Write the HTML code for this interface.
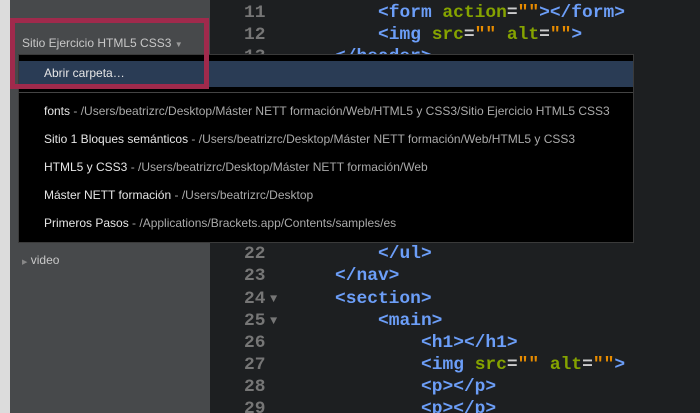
<!DOCTYPE html>
<html><head><meta charset="utf-8"><style>
*{margin:0;padding:0;box-sizing:border-box}
html,body{width:700px;height:413px;overflow:hidden}
body{position:relative;background:#1d1f21;font-family:"Liberation Sans",sans-serif}
.strip{position:absolute;left:0;top:0;width:10px;height:413px;background:#dcdcdc}
.side{position:absolute;left:10px;top:0;width:200px;height:413px;background:#47494b}
.ed{position:absolute;left:210px;top:0;width:490px;height:413px;background:#1d1f21}
.ln{position:absolute;left:244px;font:bold 17.9px/22px "Liberation Mono",monospace;color:#767676;white-space:pre}
.cd{position:absolute;font:bold 17.9px/22px "Liberation Mono",monospace;color:#6c9ef8;white-space:pre}
.a{color:#85a300}.s{color:#e88c00}.e{color:#ccc}
.tri{position:absolute;left:26px;color:#767676;font-size:12px}
.title{position:absolute;left:22px;top:36px;font-size:12px;color:#c8c8c8}
.red{position:absolute;left:10px;top:18px;width:199px;height:71px;border:5px solid #a02a4c;z-index:3}
.dd{position:absolute;left:18px;top:54px;width:616px;height:189px;background:#000;border:1px solid #3a3a3a;z-index:2;font-size:12px;color:#e6e6e6}
.hl{position:absolute;left:0;top:6px;width:614px;height:26px;background:#2a3c55}
.it{position:absolute;left:25px;white-space:nowrap}
.it span{color:#aaa}
.sep{position:absolute;left:0;top:37px;width:614px;height:1px;background:#444}
</style></head><body>
<div class="strip"></div>
<div class="side"></div>
<div class="ed"></div>
<div class="ln" style="top:2px">11</div>
<div class="ln" style="top:24px">12</div>
<div class="ln" style="top:46px">13</div>
<div class="cd" style="left:378px;top:2px">&lt;form <span class="a">action</span><span class="e">=</span><span class="s">""</span>&gt;&lt;/form&gt;</div>
<div class="cd" style="left:378px;top:24px">&lt;img <span class="a">src</span><span class="e">=</span><span class="s">""</span> <span class="a">alt</span><span class="e">=</span><span class="s">""</span>&gt;</div>
<div class="cd" style="left:335px;top:46px">&lt;/header&gt;</div>
<div class="ln" style="top:243px">22</div>
<div class="ln" style="top:265px">23</div>
<div class="ln" style="top:288px">24<span class="tri">▼</span></div>
<div class="ln" style="top:310px">25<span class="tri">▼</span></div>
<div class="ln" style="top:332px">26</div>
<div class="ln" style="top:354px">27</div>
<div class="ln" style="top:376px">28</div>
<div class="ln" style="top:398px">29</div>
<div class="cd" style="left:378px;top:243px">&lt;/ul&gt;</div>
<div class="cd" style="left:335px;top:265px">&lt;/nav&gt;</div>
<div class="cd" style="left:335px;top:288px">&lt;section&gt;</div>
<div class="cd" style="left:378px;top:310px">&lt;main&gt;</div>
<div class="cd" style="left:421px;top:332px">&lt;h1&gt;&lt;/h1&gt;</div>
<div class="cd" style="left:421px;top:354px">&lt;img <span class="a">src</span><span class="e">=</span><span class="s">""</span> <span class="a">alt</span><span class="e">=</span><span class="s">""</span>&gt;</div>
<div class="cd" style="left:421px;top:376px">&lt;p&gt;&lt;/p&gt;</div>
<div class="cd" style="left:421px;top:398px">&lt;p&gt;&lt;/p&gt;</div>
<div class="title">Sitio Ejercicio HTML5 CSS3 <span style="font-size:8px;color:#999">▼</span></div>
<div style="position:absolute;left:22px;top:253px;font-size:12px;color:#c8c8c8"><span style="font-size:7px;color:#888">▶</span>&nbsp;video</div>
<div class="red"></div>
<div class="dd">
<div class="hl"></div>
<div class="it" style="top:11px">Abrir carpeta…</div>
<div class="sep"></div>
<div class="it" style="top:49px">fonts <span>- /Users/beatrizrc/Desktop/Máster NETT formación/Web/HTML5 y CSS3/Sitio Ejercicio HTML5 CSS3</span></div>
<div class="it" style="top:77px">Sitio 1 Bloques semánticos <span>- /Users/beatrizrc/Desktop/Máster NETT formación/Web/HTML5 y CSS3</span></div>
<div class="it" style="top:105px">HTML5 y CSS3 <span>- /Users/beatrizrc/Desktop/Máster NETT formación/Web</span></div>
<div class="it" style="top:133px">Máster NETT formación <span>- /Users/beatrizrc/Desktop</span></div>
<div class="it" style="top:161px">Primeros Pasos <span>- /Applications/Brackets.app/Contents/samples/es</span></div>
</div>
</body></html>
